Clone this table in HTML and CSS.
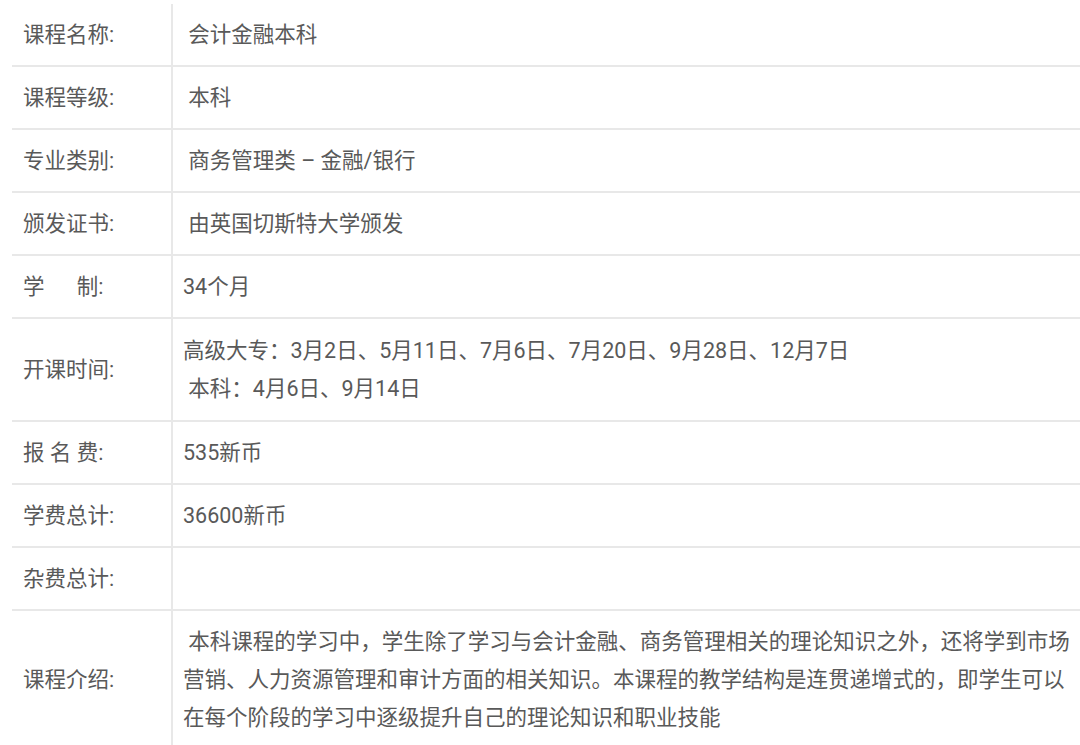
FILE: index.html
```html
<!DOCTYPE html>
<html lang="zh-CN">
<head>
    <meta charset="UTF-8">
    <meta name="viewport" content="width=device-width, initial-scale=1.0">
    <title>会计金融本科</title>
    <link rel="stylesheet" href="styles.css">
</head>
<body>
    <table class="course-table">
        <tr>
            <td class="label">课程名称:</td>
            <td class="value">&nbsp;会计金融本科</td>
        </tr>
        <tr>
            <td class="label">课程等级:</td>
            <td class="value">&nbsp;本科</td>
        </tr>
        <tr>
            <td class="label">专业类别:</td>
            <td class="value">&nbsp;商务管理类 – 金融/银行</td>
        </tr>
        <tr>
            <td class="label">颁发证书:</td>
            <td class="value">&nbsp;由英国切斯特大学颁发</td>
        </tr>
        <tr>
            <td class="label">学&#12288;&nbsp;&nbsp;制:</td>
            <td class="value">34个月</td>
        </tr>
        <tr class="multi">
            <td class="label">开课时间:</td>
            <td class="value">高级大专：3月2日、5月11日、7月6日、7月20日、9月28日、12月7日<br>&nbsp;本科：4月6日、9月14日</td>
        </tr>
        <tr>
            <td class="label">报&nbsp;名&nbsp;费:</td>
            <td class="value">535新币</td>
        </tr>
        <tr>
            <td class="label">学费总计:</td>
            <td class="value">36600新币</td>
        </tr>
        <tr>
            <td class="label">杂费总计:</td>
            <td class="value"></td>
        </tr>
        <tr>
            <td class="label">课程介绍:</td>
            <td class="value">&nbsp;本科课程的学习中，学生除了学习与会计金融、商务管理相关的理论知识之外，还将学到市场营销、人力资源管理和审计方面的相关知识。本课程的教学结构是连贯递增式的，即学生可以在每个阶段的学习中逐级提升自己的理论知识和职业技能</td>
        </tr>
    </table>
</body>
</html>
```

FILE: styles.css
```css
html, body {
    overflow: hidden;
}
body {
    margin: 0;
    background: #fff;
    font-family: Roboto, "Noto Sans CJK SC", sans-serif;
    font-size: 21.5px;
    color: #595959;
}
.course-table {
    border-collapse: collapse;
    margin: 4px 0 0 12px;
    table-layout: fixed;
    width: 1078px;
}
.course-table td {
    padding: 11.5px 10px 11.5px 11px;
    line-height: 38px;
    vertical-align: middle;
}
.course-table tr + tr td {
    border-top: 2px solid #e8e8e8;
}
.course-table .multi td {
    padding-top: 12.5px;
    padding-bottom: 12.5px;
}
.course-table .label {
    width: 160px;
    box-sizing: border-box;
    white-space: nowrap;
}
.course-table .value {
    border-left: 2px solid #e8e8e8;
    padding-left: 10px;
    height: 38px;
}
```
